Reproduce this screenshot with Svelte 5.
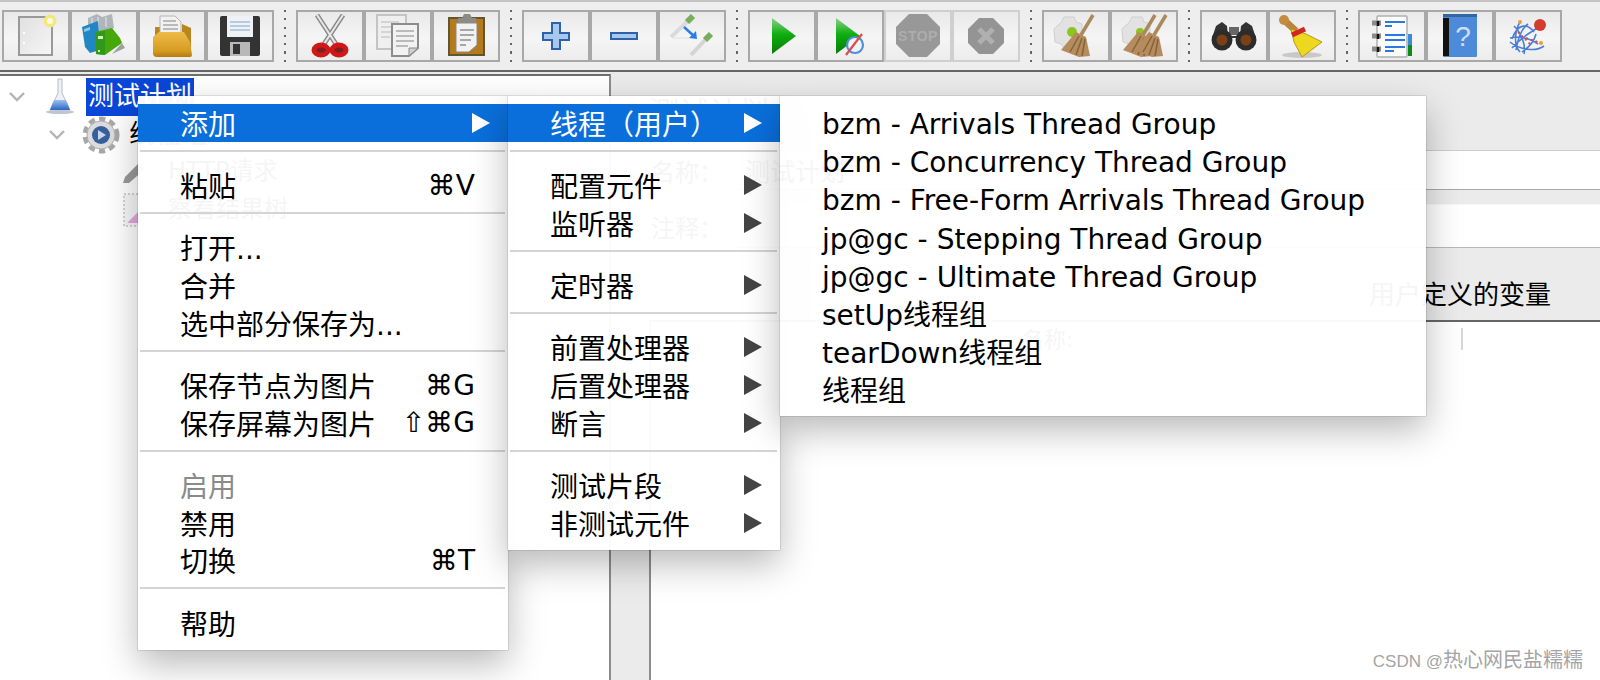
<script>
  const toolbar = [
    ['new', 'templates', 'open', 'save'],
    ['cut', 'copy', 'paste'],
    ['plus', 'minus', 'toggle'],
    ['start', 'nopause', 'stop', 'shutdown'],
    ['clear', 'clearall'],
    ['search', 'reset'],
    ['functions', 'help', 'remote']
  ];
  const dimmed = ['stop', 'shutdown'];

  const mainMenu = [
    [{ t: '添加', sub: true, on: true }],
    [{ t: '粘贴', k: '⌘V' }],
    [{ t: '打开...' }, { t: '合并' }, { t: '选中部分保存为...' }],
    [{ t: '保存节点为图片', k: '⌘G' }, { t: '保存屏幕为图片', k: '⇧⌘G' }],
    [{ t: '启用', off: true }, { t: '禁用' }, { t: '切换', k: '⌘T' }],
    [{ t: '帮助' }]
  ];
  const addMenu = [
    [{ t: '线程（用户）', sub: true, on: true }],
    [{ t: '配置元件', sub: true }, { t: '监听器', sub: true }],
    [{ t: '定时器', sub: true }],
    [{ t: '前置处理器', sub: true }, { t: '后置处理器', sub: true }, { t: '断言', sub: true }],
    [{ t: '测试片段', sub: true }, { t: '非测试元件', sub: true }]
  ];
  const threadMenu = [
    [
      { t: 'bzm - Arrivals Thread Group' },
      { t: 'bzm - Concurrency Thread Group' },
      { t: 'bzm - Free-Form Arrivals Thread Group' },
      { t: 'jp@gc - Stepping Thread Group' },
      { t: 'jp@gc - Ultimate Thread Group' },
      { t: 'setUp线程组' },
      { t: 'tearDown线程组' },
      { t: '线程组' }
    ]
  ];
</script>

{#snippet broom(dx)}
  <g transform="translate({dx} 0)">
    <path d="M49 3 L37 23" stroke="#a98a5c" stroke-width="3.5" />
    <path d="M32 20 L42 25 L46 44 L35 45 L17 38 Z" fill="#b58c5e" />
    <path d="M26 40 L35 24 M32 43 L38 26 M38 44 L41 27" stroke="#86623a" stroke-width="1.5" />
  </g>
{/snippet}

{#snippet gear()}
  <path d="M20 5 h10 l2 5 6 2 v15 l-10 9 h-8 l-3-4 -6-2 -1-13 3-3 4-3 z" fill="#e2e2e2" stroke="#cfcfcf" />
{/snippet}

{#snippet icon(name)}
  <svg class="tool-icon" viewBox="0 0 64 48" width="64" height="48" fill="none">
    {#if name === 'new'}
      <defs>
        <linearGradient id="sheet" x1="0" y1="0" x2="1" y2="1">
          <stop offset="0" stop-color="#e0e0e0" />
          <stop offset="1" stop-color="#f6f6f6" />
        </linearGradient>
      </defs>
      <rect x="15" y="5" width="33" height="38" fill="url(#sheet)" stroke="#999" stroke-width="2" />
      <rect x="19" y="20" width="2" height="2" fill="#fff" />
      <rect x="19" y="30" width="2" height="2" fill="#fff" />
      <circle cx="46" cy="9" r="6.5" fill="#f3e87e" />
      <circle cx="46" cy="9" r="3" fill="#fdfbe0" />
    {:else if name === 'templates'}
      <path d="M16 6 L25 2 L30 5 L40 2 L42 16 L26 22 L16 18 Z" fill="#aeb6bc" />
      <path d="M20 6 V16 M26 5 V18 M34 5 V15" stroke="#d6dade" stroke-width="1.4" />
      <path d="M10 15 L26 9 L28 38 L18 41 L13 35 Z" fill="#2286c4" />
      <path d="M12 17 l6-2 v3 l-6 2 z" fill="#8cc6ea" />
      <path d="M40 16 L48 26 L50 31 L33 43 L24 42 L23 20 Z" fill="#46a80a" />
      <path d="M23 20 L33 19 L33 43 L24 42 Z" fill="#2f9a1a" />
      <path d="M26 24 h5 v3 h-5 z M26 38 h2 v2 h-2 z" fill="#d7f0c4" />
      <path d="M40 42 L53 36 L50 31 Z" fill="#a0a0a0" />
    {:else if name === 'open'}
      <defs>
        <linearGradient id="folder" x1="0" y1="0" x2="0" y2="1">
          <stop offset="0" stop-color="#eebb48" />
          <stop offset=".75" stop-color="#d69c22" />
          <stop offset="1" stop-color="#b27c12" />
        </linearGradient>
      </defs>
      <path d="M15 15 h7 v16 h-7 z M42 12 l9 4 v22 h-9 z" fill="#b8861c" />
      <path d="M20 4 h15 l6 6 v18 h-21 z" fill="#f1f1f1" stroke="#b5b5b5" />
      <path d="M23 9 h13 M23 13 h15 M23 17 h15" stroke="#a8a8a8" stroke-width="1.5" />
      <path d="M13 25 L19 20 H44 L50 30 L52 43 Q52 45 50 45 H17 Q13 45 13 41 Z" fill="url(#folder)" />
    {:else if name === 'save'}
      <rect x="12" y="4" width="40" height="40" rx="2" fill="#333" />
      <rect x="19" y="4" width="26" height="21" fill="#eef2f6" />
      <path d="M22 10 H42 M22 14 H42 M22 18 H42" stroke="#a6bed6" stroke-width="1.6" />
      <rect x="22" y="30" width="20" height="14" fill="#b8b8b8" />
      <rect x="25" y="32" width="7" height="10" fill="#333" />
    {:else if name === 'cut'}
      <path d="M19 3 L38 32 M45 3 L26 32" stroke="#8a8a8a" stroke-width="5" />
      <path d="M19 3 L38 32 M45 3 L26 32" stroke="#e8e8e8" stroke-width="2" />
      <ellipse cx="23" cy="38" rx="7" ry="5" stroke="#d01818" stroke-width="5" fill="#7a2020" />
      <ellipse cx="41" cy="38" rx="7" ry="5" stroke="#d01818" stroke-width="5" fill="#7a2020" />
    {:else if name === 'copy'}
      <rect x="11" y="3" width="29" height="34" fill="#efefef" stroke="#c4c4c4" stroke-width="2" />
      <path d="M15 10 H33 M15 15 H33 M15 20 H30 M15 25 H24" stroke="#ccc" stroke-width="1.5" />
      <path d="M26 12 H52 V36 L43 44 H26 Z" fill="#f2f2f2" stroke="#8c8c8c" stroke-width="2" />
      <path d="M30 19 H48 M30 24 H48 M30 29 H48 M30 34 H42" stroke="#a8a8a8" stroke-width="1.5" />
      <path d="M43 44 V36 H52 Z" fill="#d0d0d0" stroke="#8c8c8c" />
    {:else if name === 'paste'}
      <rect x="15" y="6" width="35" height="37" fill="#b57a1e" stroke="#5f5632" stroke-width="2" />
      <path d="M22 11 H43 V33 L35 40 H22 Z" fill="#f2f2f2" stroke="#888" />
      <path d="M26 18 H40 M26 23 H40 M26 28 H37 M26 33 H32" stroke="#8e8e8e" stroke-width="1.5" />
      <path d="M24 11 V6 H28 L30 2 H36 L38 6 H42 V11 Z" fill="#8c8c84" />
    {:else if name === 'plus'}
      <path d="M28 11 h8 v10 h9 v7 h-9 v9 h-8 v-9 h-9 v-7 h9 z" fill="#a9c8ec" stroke="#2c62ab" stroke-width="2" />
    {:else if name === 'minus'}
      <rect x="19" y="21" width="26" height="6" fill="#a9c8ec" stroke="#2c62ab" stroke-width="2" />
    {:else if name === 'toggle'}
      <path d="M11 25 L28 9" stroke="#dadada" stroke-width="4" />
      <path d="M27 10 L33 4" stroke="#78ad5e" stroke-width="6" />
      <path d="M13 26 H30" stroke="#e0e0e0" />
      <path d="M31 43 L46 27" stroke="#d4d4d4" stroke-width="4" />
      <path d="M45 28 L51 22" stroke="#78ad5e" stroke-width="6" />
      <path d="M24 15 L35 25" stroke="#2a7ee8" stroke-width="2.5" />
      <path d="M37 27 L29 26 L36 19 Z" fill="#2a7ee8" />
    {:else if name === 'start' || name === 'nopause'}
      <defs>
        <linearGradient id="go-{name}" x1="0" y1="0" x2="0" y2="1">
          <stop offset="0" stop-color="#8ccf8c" />
          <stop offset=".45" stop-color="#0fae0f" />
          <stop offset="1" stop-color="#087a08" />
        </linearGradient>
      </defs>
      {#if name === 'start'}
        <path d="M22 6 L46 24 L22 42 Z" fill="url(#go-start)" />
      {:else}
        <path d="M18 6 L42 24 L18 42 Z" fill="url(#go-nopause)" />
        <circle cx="37" cy="33" r="8" fill="#eef3f8" stroke="#4c90d6" stroke-width="2.2" />
        <path d="M28 43 L44 22" stroke="#e04a4a" stroke-width="2.2" />
      {/if}
    {:else if name === 'stop'}
      <path d="M23 2 H41 L54 15 V32 L41 45 H23 L10 32 V15 Z" fill="#989898" />
      <text x="32" y="29" text-anchor="middle" class="stop-text">STOP</text>
    {:else if name === 'shutdown'}
      <path d="M25 6 H39 L50 17 V31 L39 42 H25 L14 31 V17 Z" fill="#949494" />
      <path d="M25 17 L39 31 M39 17 L25 31" stroke="#b0b0b0" stroke-width="5" />
    {:else if name === 'clear'}
      {@render gear()}
      <circle cx="28" cy="20" r="5" fill="#8ec41e" />
      {@render broom(0)}
    {:else if name === 'clearall'}
      {@render gear()}
      <circle cx="28" cy="20" r="4" fill="#8ec41e" />
      {@render broom(-6)}
      {@render broom(5)}
    {:else if name === 'search'}
      <path d="M14 14 L20 10 L25 14 L26 24 H38 L39 14 L44 10 L50 14 L54 26 H10 Z" fill="#333" />
      <rect x="27" y="15" width="10" height="8" fill="#666" />
      <circle cx="20" cy="28" r="10.5" fill="#2c2c2c" />
      <circle cx="44" cy="28" r="10.5" fill="#2c2c2c" />
      <circle cx="20" cy="28" r="5.5" fill="#7a4016" />
      <circle cx="44" cy="28" r="5.5" fill="#7a4016" />
    {:else if name === 'reset'}
      <ellipse cx="32" cy="43" rx="20" ry="3" fill="#c8c8c8" />
      <path d="M14 8 L26 19" stroke="#b8863c" stroke-width="7" />
      <circle cx="14" cy="8" r="5" fill="#c48c3e" />
      <path d="M21 17 L36 22 L52 30 L32 45 L24 30 Z" fill="#ecd81e" stroke="#b89a10" />
      <path d="M22 23 L35 17" stroke="#d22424" stroke-width="5" />
    {:else if name === 'functions'}
      <rect x="17" y="4" width="30" height="41" rx="1" fill="#fbfbfb" stroke="#b0b0b0" stroke-width="1.5" />
      <path d="M25 10 H45 M25 14 H32 M25 23 H45 M25 28 H45 M25 35 H45 M25 39 H34" stroke="#2a78e4" stroke-width="2" />
      <path d="M12 11 H21 M12 24 H21 M12 37 H21" stroke="#8c8c8c" stroke-width="5" />
      <path d="M18 9 V14 M18 22 V27 M18 35 V40" stroke="#111" stroke-width="2.5" />
      <rect x="48" y="22" width="4" height="11" fill="#3a8ae0" />
      <rect x="48" y="33" width="4" height="11" fill="#0e8a1a" />
    {:else if name === 'help'}
      <rect x="15" y="2" width="34" height="43" rx="1" fill="#4e8ada" />
      <rect x="15" y="6" width="6" height="38" fill="#111" />
      <rect x="15" y="2" width="34" height="3" fill="#33679f" />
      <text x="35" y="34" text-anchor="middle" class="help-text">?</text>
    {:else if name === 'remote'}
      <path d="M16 27 C22 10 32 12 38 20 M14 30 C24 38 40 40 48 34 M18 14 C26 22 30 34 28 42 M24 10 C18 20 18 34 24 40 M16 36 C26 24 36 20 44 14 M14 26 C22 24 34 26 42 32 M20 38 C22 28 24 18 32 12 M26 40 C32 36 38 30 40 22" stroke="#4a7ed8" stroke-width="1.6" />
      <path d="M22 20 L34 32 M30 26 L42 30" stroke="#d84848" stroke-width="1.8" stroke-dasharray="2 3" />
      <circle cx="45" cy="31" r="2" fill="#e8a030" />
      <circle cx="24" cy="10" r="2" fill="#e8a030" />
      <circle cx="44" cy="13" r="6" fill="#d23c2c" />
    {/if}
  </svg>
{/snippet}

{#snippet menu(sections, cls)}
  <div class="menu {cls}">
    {#each sections as section, i}
      {#if i > 0}<div class="sep"></div>{/if}
      {#each section as item}
        <div class="item" class:on={item.on} class:off={item.off}>
          <span>{item.t}</span>
          {#if item.k}<span class="key">{item.k}</span>{/if}
          {#if item.sub}<span class="arrow"></span>{/if}
        </div>
      {/each}
    {/each}
  </div>
{/snippet}

<div class="page">
  <div class="toolbar">
    {#each toolbar as group, i}
      {#if i > 0}<div class="dots"></div>{/if}
      <div class="group">
        {#each group as name}
          <div class="btn" class:dim={dimmed.includes(name)}>{@render icon(name)}</div>
        {/each}
      </div>
    {/each}
  </div>

  <div class="split">
    <div class="tree">
      <div class="row" style="padding-left: 8px">
        <svg class="twisty" viewBox="0 0 18 12" width="18" height="12"><path d="M2 2 L9 9 L16 2" stroke="#b4b4b4" stroke-width="2.4" fill="none" /></svg>
        <svg class="node" viewBox="0 0 38 38" width="38" height="38">
          <defs>
            <linearGradient id="liquid" x1="0" y1="0" x2="0" y2="1">
              <stop offset="0" stop-color="#9cc0ee" />
              <stop offset="1" stop-color="#2a66c4" />
            </linearGradient>
          </defs>
          <path d="M16 1 h4 v14 l8 17 h-20 l8-17 z" fill="#eef1f5" stroke="#b8bec6" />
          <path d="M12 22 h12 l4 10 h-20 z" fill="url(#liquid)" />
          <ellipse cx="18" cy="34" rx="14" ry="2" fill="#c0c6d0" />
        </svg>
        <span class="label selected">测试计划</span>
      </div>
      <div class="row" style="padding-left: 48px">
        <svg class="twisty" viewBox="0 0 18 12" width="18" height="12"><path d="M2 2 L9 9 L16 2" stroke="#b4b4b4" stroke-width="2.4" fill="none" /></svg>
        <svg class="node" viewBox="0 0 38 38" width="38" height="38">
          <circle cx="19" cy="19" r="15.5" fill="none" stroke="#a8a8a8" stroke-width="6" stroke-dasharray="6 4.1" />
          <circle cx="19" cy="19" r="14" fill="#dcdcdc" stroke="#b0b0b0" />
          <circle cx="19" cy="19" r="9" fill="#365f9c" />
          <path d="M16 14 L24 19 L16 24 Z" fill="#c6d6ec" />
        </svg>
        <span class="label">线程组</span>
      </div>
      <div class="row child" style="padding-left: 105px">
        <svg class="node" viewBox="0 0 38 38" width="38" height="38">
          <path d="M2 30 L4 24 L18 10 L24 16 L8 30 Z" fill="#9a9a9a" />
        </svg>
        <span class="label">HTTP请求</span>
      </div>
      <div class="row child" style="padding-left: 105px">
        <svg class="node" viewBox="0 0 38 38" width="38" height="38">
          <rect x="3" y="3" width="26" height="32" fill="#f8f8f8" stroke="#a8a8a8" stroke-dasharray="2 2" />
          <path d="M6 32 L18 20 V32 Z" fill="#e6a8e0" />
        </svg>
        <span class="label">察看结果树</span>
      </div>
    </div>

    <div class="detail">
      <h1>测试计划</h1>
      <div class="field name"><span class="caption">名称：</span><div class="input">测试计划</div></div>
      <div class="field comment"><span class="caption">注释：</span><div class="input"></div></div>
      <div class="table-title"><span>用户定义的变量</span></div>
      <div class="table">
        <div class="thead">
          <span class="th-name">名称:</span>
          <span class="th-sep"></span>
        </div>
      </div>
    </div>
  </div>

  {@render menu(mainMenu, 'm1')}
  {@render menu(addMenu, 'm2')}
  {@render menu(threadMenu, 'm3')}

  <div class="watermark">CSDN @<span>热心网民盐糯糯</span></div>
</div>

<style>
  :global(body) {
    margin: 0;
  }

  .page {
    position: relative;
    width: 1600px;
    height: 680px;
    overflow: hidden;
    display: flex;
    flex-direction: column;
    background: #ececec;
    font-family: "DejaVu Sans", "Noto Sans CJK SC", sans-serif;
    font-size: 28px;
    color: #000;
  }

  .toolbar {
    display: flex;
    box-sizing: border-box;
    height: 72px;
    padding: 8px 0 0 2px;
    background: #eeeeee;
    border-top: 2px solid #c4c4c4;
    border-bottom: 2px solid #666;
  }

  .group {
    display: flex;
    height: 52px;
  }

  .btn {
    box-sizing: border-box;
    width: 68px;
    height: 52px;
    border: 2px solid #a8a8a8;
    background: linear-gradient(#e9e9e9, #f5f5f5 55%, #ececec);
  }

  .btn.dim {
    border-color: #cfcfcf;
  }

  .tool-icon {
    display: block;
  }

  .stop-text {
    font: bold 14px "Liberation Sans", sans-serif;
    letter-spacing: 0.5px;
    fill: #adadad;
  }

  .help-text {
    font: 28px "Liberation Sans", sans-serif;
    fill: #cfe0f6;
  }

  .dots {
    width: 22px;
    height: 52px;
    background: repeating-linear-gradient(#666 0 2px, transparent 2px 8.3px) center / 2px 100% no-repeat;
  }

  .split {
    flex: 1;
    display: flex;
    min-height: 0;
  }

  .tree {
    box-sizing: border-box;
    width: 611px;
    margin-top: 2px;
    padding-top: 2px;
    background: #fff;
    border-top: 2px solid #6e6e6e;
    border-right: 2px solid #8c8c8c;
    font-size: 26px;
  }

  .row {
    display: flex;
    align-items: center;
    height: 37.7px;
  }

  .child {
    font-size: 24px;
  }

  .twisty {
    flex: none;
  }

  .node {
    flex: none;
    margin-left: 16px;
    margin-right: 6px;
  }

  .label {
    padding: 0 3px;
    line-height: 37.7px;
  }

  .selected {
    background: #0a47d8;
    color: #fff;
    padding: 0 2px;
  }

  .detail {
    flex: 1;
    min-width: 0;
    display: flex;
    flex-direction: column;
    padding-left: 38px;
    background: #ebebeb;
  }

  h1 {
    box-sizing: border-box;
    height: 79px;
    margin: 0;
    padding-top: 23px;
    font-size: 30px;
    font-weight: normal;
    line-height: 36px;
  }

  .field {
    display: flex;
    align-items: center;
    font-size: 24px;
  }

  .caption {
    width: 86px;
    flex: none;
    padding-left: 2px;
    box-sizing: border-box;
  }

  .input {
    flex: 1;
    height: 100%;
    padding-left: 10px;
    display: flex;
    align-items: center;
    background: #fff;
    font-size: 25px;
  }

  .name {
    height: 38px;
  }

  .name .input {
    border-top: 1px solid #cdcdcd;
    border-bottom: 1px solid #a8a8a8;
  }

  .comment {
    height: 42px;
    margin-top: 16px;
  }

  .comment .input {
    border-top: 1px solid #f8f8f8;
    border-bottom: 1px solid #b8b8b8;
  }

  .table-title {
    height: 75px;
    box-sizing: border-box;
    padding: 29px 0 0 720px;
    font-size: 26px;
    line-height: 38px;
    border-bottom: 2px solid #666;
  }

  .table {
    flex: 1;
    background: #fff;
    border-left: 2px solid #8c8c8c;
  }

  .thead {
    display: flex;
    height: 30px;
    align-items: center;
    position: relative;
  }

  .th-name {
    margin-left: 371px;
    font-size: 22px;
  }

  .th-sep {
    position: absolute;
    left: 810px;
    top: 6px;
    width: 2px;
    height: 22px;
    background: #d8d8d8;
  }

  .menu {
    position: absolute;
    box-sizing: border-box;
    top: 96px;
    padding: 8px 0;
    background: rgba(255, 255, 255, 0.96);
    box-shadow: 0 0 1px rgba(0, 0, 0, 0.55), 0 14px 34px rgba(0, 0, 0, 0.28);
  }

  .m1 {
    left: 138px;
    width: 370px;
  }

  .m2 {
    left: 508px;
    width: 272px;
  }

  .m3 {
    left: 780px;
    width: 646px;
    padding: 10px 0 4px;
  }

  .m3 .item {
    height: 38.2px;
    line-height: 38px;
  }

  .item {
    display: flex;
    align-items: center;
    justify-content: space-between;
    box-sizing: border-box;
    height: 37.7px;
    padding: 0 18px 0 42px;
    white-space: nowrap;
  }

  .item.on {
    background: #0a6fdb;
    color: #fff;
  }

  .item.off {
    color: #8a8a8a;
  }

  .key {
    margin-right: 15px;
  }

  .arrow {
    width: 0;
    height: 0;
    border-left: 18px solid #444;
    border-top: 10px solid transparent;
    border-bottom: 10px solid transparent;
  }

  .on .arrow {
    border-left-color: #fff;
  }

  .sep {
    height: 2px;
    margin: 8px 3px 14.6px 2px;
    background: #d4d4d4;
  }

  .watermark {
    position: absolute;
    right: 17px;
    top: 646px;
    font-family: "Liberation Sans", "Noto Sans CJK SC", sans-serif;
    font-size: 17px;
    line-height: 28px;
    color: #a4a4a4;
  }

  .watermark span {
    font-size: 20px;
  }
</style>
